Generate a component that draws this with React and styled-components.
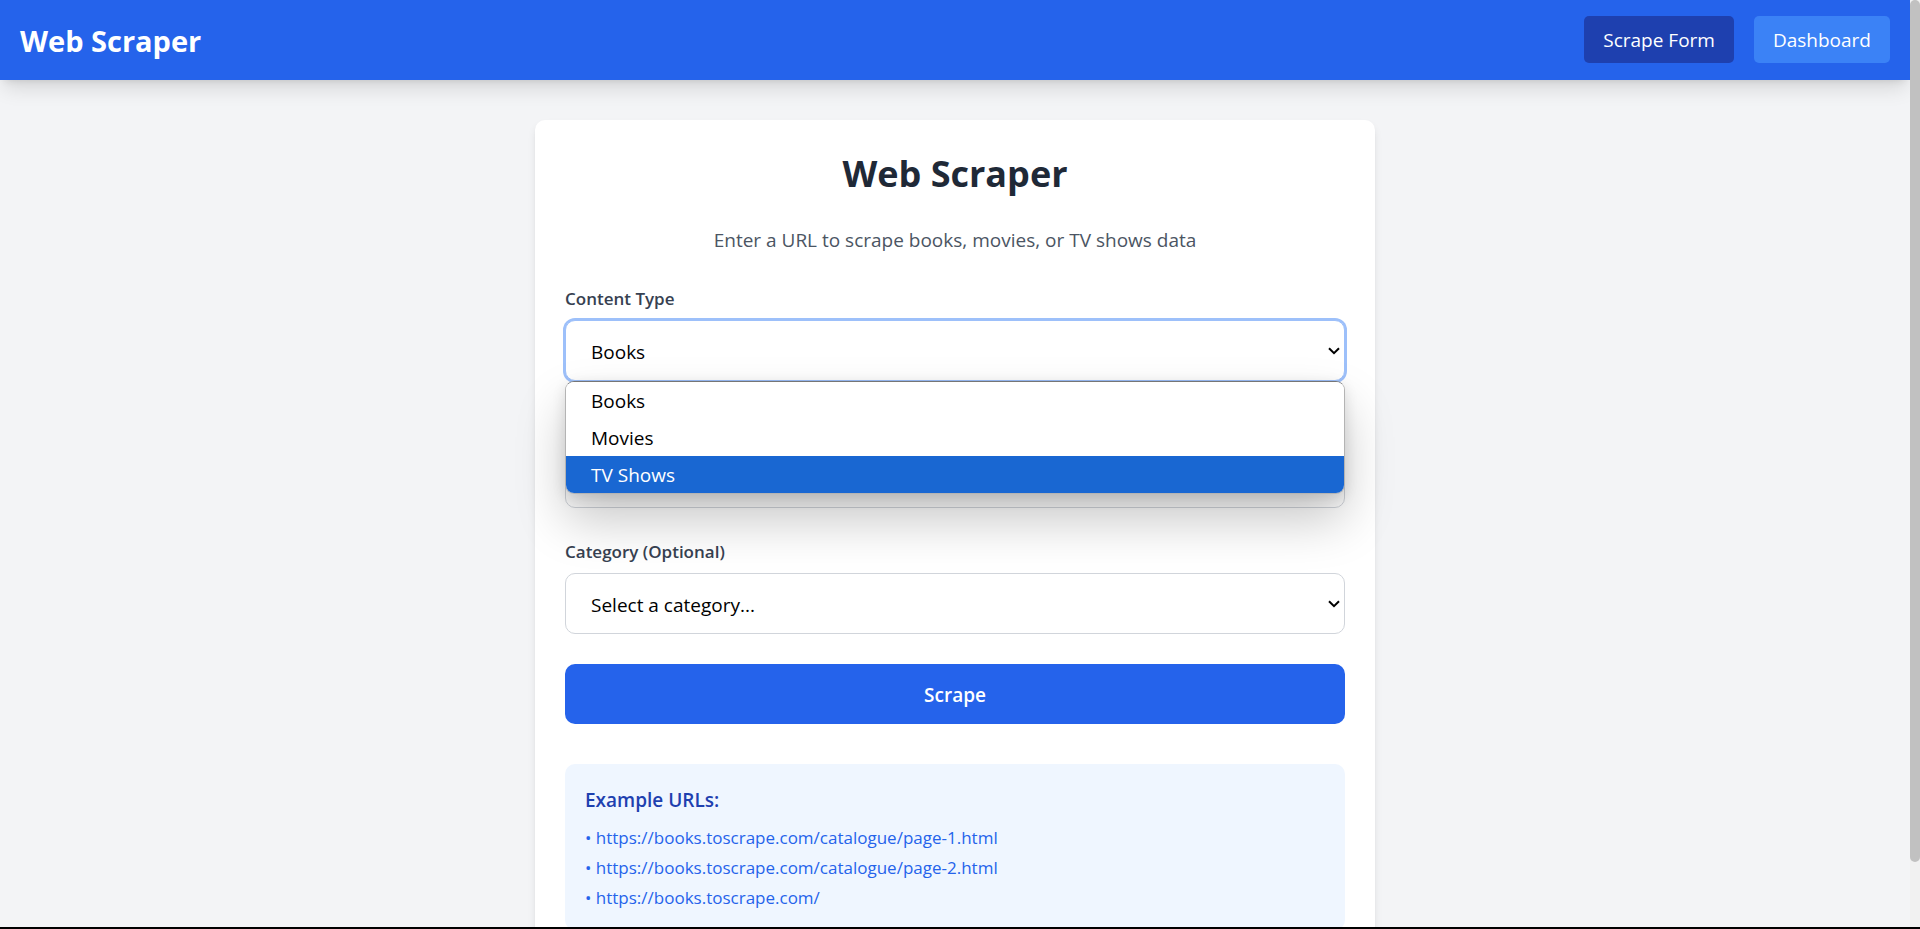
import React, { useState } from 'react';
import styled, { createGlobalStyle } from 'styled-components';

const GlobalStyle = createGlobalStyle`
  *, *::before, *::after { box-sizing: border-box; }
  body {
    margin: 0;
    background: #f3f4f6;
    color: #000;
    font-family: "Segoe UI", "Open Sans", "Noto Sans", sans-serif;
    font-size: 19px;
    line-height: 30px;
  }
  h1, h2, h3, p, ul { margin: 0; padding: 0; }
  button, input, select { font: inherit; color: inherit; }
`;

const Window = styled.div`
  display: flex;
  height: 100vh;
  border-bottom: 2px solid #000;
`;

const Page = styled.div`
  flex: 1;
  min-width: 0;
  overflow-y: auto;
  scrollbar-width: none;
`;

const ScrollTrack = styled.div`
  flex: none;
  width: 10px;
  background: #f1f1f1;
`;

const ScrollThumb = styled.div`
  height: 93%;
  border-radius: 5px;
  background: #c1c1c1;
`;

const Header = styled.header`
  display: flex;
  align-items: center;
  justify-content: space-between;
  height: 80px;
  padding: 0 20px 1px;
  background: #2563eb;
  color: #fff;
  box-shadow: 0 12px 19px -4px rgba(0, 0, 0, 0.12), 0 5px 8px -5px rgba(0, 0, 0, 0.12);
`;

const Brand = styled.h1`
  padding-top: 3px;
  font-size: 29px;
  font-weight: 700;
  line-height: 40px;
`;

const Nav = styled.nav`
  display: flex;
  gap: 20px;
`;

const NavButton = styled.button`
  padding: 11px 19px 9px;
  border: 0;
  border-radius: 5px;
  background: ${({ $active }) => ($active ? '#1e40af' : '#3b82f6')};
  line-height: 27px;
  cursor: pointer;
`;

const Main = styled.main`
  padding: 40px 20px;
`;

const Card = styled.section`
  max-width: 840px;
  margin: 0 auto;
  padding: 30px;
  border-radius: 10px;
  background: #fff;
  box-shadow: 0 5px 8px -1px rgba(0, 0, 0, 0.1), 0 3px 5px -3px rgba(0, 0, 0, 0.1);
`;

const Title = styled.h2`
  margin-bottom: 26px;
  color: #1f2937;
  font-size: 36px;
  font-weight: 700;
  line-height: 48px;
  text-align: center;
`;

const Subtitle = styled.p`
  margin-bottom: 29px;
  color: #4b5563;
  line-height: 32px;
  text-align: center;
`;

const Form = styled.form`
  display: flex;
  flex-direction: column;
  gap: 30px;
`;

const Field = styled.div`
  position: relative;
  display: flex;
  flex-direction: column;
  gap: 8px;
`;

const Label = styled.label`
  color: #374151;
  font-size: 17px;
  font-weight: 600;
  line-height: 27px;
`;

const SelectBox = styled.div`
  display: grid;
  align-items: center;
  > * { grid-area: 1 / 1; }
`;

const Select = styled.select`
  appearance: none;
  width: 100%;
  height: 61px;
  padding: 2px 25px 0;
  border: 1px solid ${({ $open }) => ($open ? '#9dc0fa' : '#d1d5db')};
  border-radius: 10px;
  outline: 0;
  background: #fff;
  box-shadow: ${({ $open }) => ($open ? '0 0 0 2px #9dc0fa' : 'none')};
`;

const Chevron = styled.svg`
  justify-self: end;
  width: 12px;
  height: 8px;
  margin-right: 5px;
  pointer-events: none;
`;

const TextInput = styled.input`
  width: 100%;
  height: 62px;
  padding: 0 20px;
  border: 1px solid #d1d5db;
  border-radius: 10px;
  background: #fff;
`;

const Menu = styled.ul`
  position: absolute;
  top: 100%;
  left: 0;
  right: 0;
  z-index: 1;
  overflow: hidden;
  list-style: none;
  border: 1px solid #b4b4b4;
  border-top-color: #767676;
  border-radius: 9px;
  background: #fff;
  box-shadow: 0 26px 50px rgba(0, 0, 0, 0.22), 0 4px 14px rgba(0, 0, 0, 0.12);
`;

const MenuItem = styled.li`
  padding: 2px 25px 0;
  background: ${({ $active }) => ($active ? '#1967d2' : '#fff')};
  color: ${({ $active }) => ($active ? '#fff' : '#000')};
  line-height: 35px;
`;

const SubmitButton = styled.button`
  height: 60px;
  padding: 2px 20px 0;
  border: 0;
  border-radius: 10px;
  background: #2563eb;
  color: #fff;
  font-weight: 600;
  cursor: pointer;
`;

const Examples = styled.aside`
  margin-top: 40px;
  padding: 20px;
  border-radius: 10px;
  background: #eff6ff;
`;

const ExamplesTitle = styled.h3`
  margin-bottom: 9px;
  color: #1e40af;
  font-size: 19px;
  font-weight: 600;
  line-height: 32px;
`;

const UrlList = styled.ul`
  display: flex;
  flex-direction: column;
  gap: 5px;
  list-style: none;
  color: #2563eb;
  font-size: 17px;
  line-height: 25px;
`;

const TYPES = ['Books', 'Movies', 'TV Shows'];
const URLS = [
  'https://books.toscrape.com/catalogue/page-1.html',
  'https://books.toscrape.com/catalogue/page-2.html',
  'https://books.toscrape.com/',
];

function SelectField({ id, label, options, open, children }) {
  return (
    <Field>
      <Label htmlFor={id}>{label}</Label>
      <SelectBox>
        <Select id={id} $open={open}>
          {options.map((option) => (
            <option key={option}>{option}</option>
          ))}
        </Select>
        <Chevron viewBox="0 0 12 8" aria-hidden="true">
          <path d="M1 1.2 6 6.2 11 1.2" fill="none" stroke="#000" strokeWidth="2" />
        </Chevron>
      </SelectBox>
      {children}
    </Field>
  );
}

export default function App() {
  const [view, setView] = useState('Scrape Form');
  return (
    <>
      <GlobalStyle />
      <Window>
        <Page>
          <Header>
            <Brand>Web Scraper</Brand>
            <Nav>
              {['Scrape Form', 'Dashboard'].map((name) => (
                <NavButton key={name} type="button" $active={view === name} onClick={() => setView(name)}>
                  {name}
                </NavButton>
              ))}
            </Nav>
          </Header>
          <Main>
            <Card>
              <Title>Web Scraper</Title>
              <Subtitle>Enter a URL to scrape books, movies, or TV shows data</Subtitle>
              <Form onSubmit={(event) => event.preventDefault()}>
                <SelectField id="content-type" label="Content Type" options={TYPES} open>
                  <Menu>
                    {TYPES.map((type) => (
                      <MenuItem key={type} $active={type === 'TV Shows'}>{type}</MenuItem>
                    ))}
                  </Menu>
                </SelectField>
                <Field>
                  <Label htmlFor="url">URL</Label>
                  <TextInput id="url" type="url" />
                </Field>
                <SelectField id="category" label="Category (Optional)" options={['Select a category...']} />
                <SubmitButton type="submit">Scrape</SubmitButton>
              </Form>
              <Examples>
                <ExamplesTitle>Example URLs:</ExamplesTitle>
                <UrlList>
                  {URLS.map((url) => (
                    <li key={url}>• {url}</li>
                  ))}
                </UrlList>
              </Examples>
            </Card>
          </Main>
        </Page>
        <ScrollTrack aria-hidden="true">
          <ScrollThumb />
        </ScrollTrack>
      </Window>
    </>
  );
}
